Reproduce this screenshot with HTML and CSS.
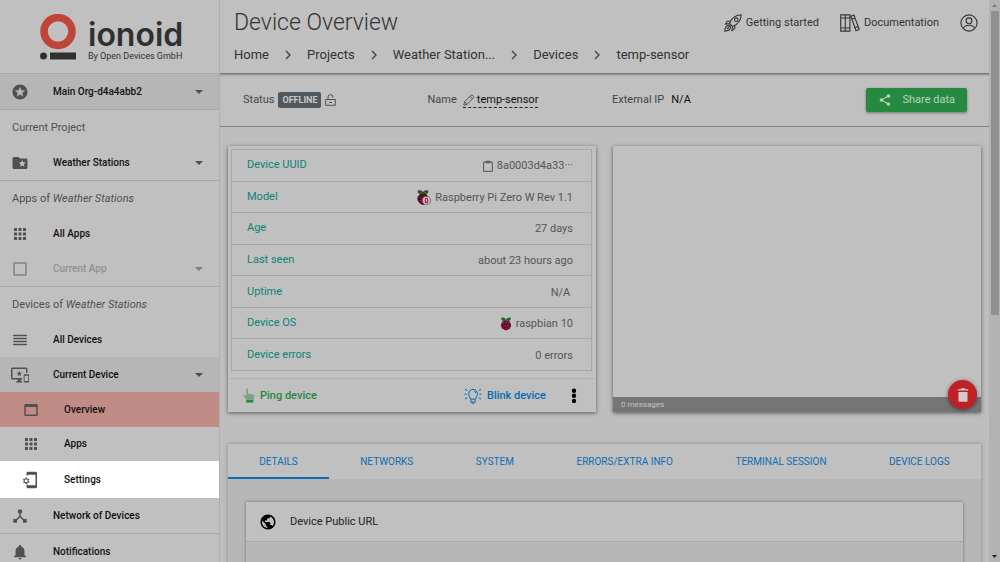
FILE: index.html
```html
<!DOCTYPE html>
<html lang="en">
<head>
<meta charset="utf-8">
<title>Device Overview</title>
<link rel="stylesheet" href="styles.css">
</head>
<body>
<div class="app">
  <nav class="sidebar" aria-label="Main">
    <a class="brand" href="#">
      <svg class="brand-mark" viewBox="0 0 36 46" width="36" height="46" aria-hidden="true"><circle cx="18" cy="17.500" r="14" fill="none" stroke="#be4538" stroke-width="7.500"/><circle cx="3.500" cy="42" r="3.500" fill="#303030"/><rect x="10" y="38.500" width="26" height="7" fill="#303030"/></svg>
      <span class="brand-text"><span class="brand-name">ionoid</span><span class="brand-sub">By Open Devices GmbH</span></span>
    </a>
    <button class="item shaded line-top line" type="button">
      <svg class="icon" viewBox="0 0 24 24"><path d="M11.99 2C6.47 2 2 6.48 2 12s4.470 10 9.990 10C17.520 22 22 17.520 22 12S17.520 2 11.990 2zm4.240 16L12 15.450 7.770 18l1.120-4.810-3.730-3.230 4.920-.42L12 5l1.920 4.530 4.920.42-3.730 3.230L16.230 18z"/></svg>
      <span class="item-label">Main Org-d4a4abb2</span><i class="caret"></i>
    </button>
    <h2 class="group">Current Project</h2>
    <button class="item line" type="button">
      <svg class="icon" viewBox="0 0 24 24"><path d="M20 6h-8l-2-2H4c-1.100 0-2 .9-2 2v12c0 1.100.9 2 2 2h16c1.100 0 2-.9 2-2V8c0-1.100-.9-2-2-2zm-2.060 11L15 15.280 12.060 17l.78-3.330-2.590-2.240 3.410-.29L15 8l1.340 3.140 3.410.29-2.590 2.240.78 3.330z"/></svg>
      <span class="item-label">Weather Stations</span><i class="caret"></i>
    </button>
    <h2 class="group">Apps of <em>Weather Stations</em></h2>
    <a class="item" href="#">
      <svg class="icon" viewBox="0 0 24 24"><path d="M4 8h4V4H4v4zm6 12h4v-4h-4v4zm-6 0h4v-4H4v4zm0-6h4v-4H4v4zm6 0h4v-4h-4v4zm6-10v4h4V4h-4zm-6 4h4V4h-4v4zm6 6h4v-4h-4v4zm0 6h4v-4h-4v4z"/></svg>
      <span class="item-label">All Apps</span>
    </a>
    <button class="item line disabled" type="button" disabled>
      <svg class="icon" viewBox="0 0 24 24"><path d="M19 5v14H5V5h14m0-2H5c-1.100 0-2 .9-2 2v14c0 1.100.9 2 2 2h14c1.100 0 2-.9 2-2V5c0-1.100-.9-2-2-2z"/></svg>
      <span class="item-label">Current App</span><i class="caret"></i>
    </button>
    <h2 class="group">Devices of <em>Weather Stations</em></h2>
    <a class="item" href="#">
      <svg class="icon" viewBox="0 0 24 24"><path d="M3 15h18v-2H3v2zm0 4h18v-2H3v2zm0-8h18V9H3v2zm0-6v2h18V5H3z"/></svg>
      <span class="item-label">All Devices</span>
    </a>
    <button class="item shaded" type="button">
      <svg class="icon" viewBox="0 0 24 24"><path d="M23 11.010L18 11c-.55 0-1 .45-1 1v9c0 .55.45 1 1 1h5c.55 0 1-.45 1-1v-9c0-.55-.45-.99-1-.99zM23 20h-5v-7h5v7zM20 2H2C.89 2 0 2.890 0 4v12c0 1.100.89 2 2 2h7v2H7v2h8v-2h-2v-2h2v-2H2V4h18v5h2V4c0-1.110-.9-2-2-2zm-8.030 7L11 6l-.97 3H7l2.470 1.760-.94 2.910 2.470-1.800 2.470 1.800-.94-2.910L15 9h-3.030z"/></svg>
      <span class="item-label">Current Device</span><i class="caret"></i>
    </button>
    <a class="item sub active" href="#">
      <svg class="icon" viewBox="0 0 24 24"><path d="M19 4H5c-1.110 0-2 .9-2 2v12c0 1.100.89 2 2 2h14c1.100 0 2-.9 2-2V6c0-1.100-.9-2-2-2zm0 14H5V8h14v10z"/></svg>
      <span class="item-label">Overview</span>
    </a>
    <a class="item sub short" href="#">
      <svg class="icon" viewBox="0 0 24 24"><path d="M4 8h4V4H4v4zm6 12h4v-4h-4v4zm-6 0h4v-4H4v4zm0-6h4v-4H4v4zm6 0h4v-4h-4v4zm6-10v4h4V4h-4zm-6 4h4V4h-4v4zm6 6h4v-4h-4v4zm0 6h4v-4h-4v4z"/></svg>
      <span class="item-label">Apps</span>
    </a>
    <a class="item sub spotlight" href="#">
      <svg class="icon" viewBox="0 0 24 24"><path d="M18 1.010L8 1c-1.100 0-2 .9-2 2v3h2V5h10v14H8v-1H6v3c0 1.100.9 2 2 2h10c1.100 0 2-.9 2-2V3c0-1.100-.9-1.990-2-1.990zM8.820 12.500l.93-.73-1-1.730-1.180.46c-.25-.19-.52-.35-.82-.47L6.570 8.800h-2l-.18 1.230c-.3.120-.57.280-.82.470l-1.180-.46-1 1.730.98.73a3.500 3.500 0 0 0 0 1l-.98.73 1 1.730 1.180-.46c.25.190.52.350.82.470l.18 1.230h2l.18-1.230c.3-.12.57-.28.82-.47l1.180.46 1-1.730-.93-.73a3.500 3.500 0 0 0 0-1zM5.570 15.100a2.100 2.100 0 1 1 0-4.200 2.100 2.100 0 0 1 0 4.200z"/></svg>
      <span class="item-label">Settings</span>
    </a>
    <a class="item line" href="#">
      <svg class="icon" viewBox="0 0 24 24"><path d="M17 16l-4-4V8.820C14.160 8.400 15 7.300 15 6c0-1.660-1.340-3-3-3S9 4.340 9 6c0 1.300.84 2.400 2 2.820V12l-4 4H3v5h5v-3.050l4-4.200 4 4.200V21h5v-5h-4z"/></svg>
      <span class="item-label">Network of Devices</span>
    </a>
    <a class="item" href="#">
      <svg class="icon" viewBox="0 0 24 24"><path d="M12 22c1.100 0 2-.9 2-2h-4c0 1.100.89 2 2 2zm6-6v-5c0-3.070-1.640-5.640-4.500-6.320V4c0-.83-.67-1.500-1.500-1.500s-1.500.67-1.500 1.500v.68C7.630 5.360 6 7.920 6 11v5l-2 2v1h16v-1l-2-2z"/></svg>
      <span class="item-label">Notifications</span>
    </a>
  </nav>

  <main class="main">
    <header class="header">
      <div class="header-top">
        <h1 class="title">Device Overview</h1>
        <div class="header-links">
          <a class="header-link" href="#">
            <svg class="line-icon" viewBox="0 0 18 18" width="18" height="18"><path d="M5.500 9.500C7 5 11 1.300 17.200.8 16.800 7 13 11 8.500 12.500zM6.500 7.200H3.200L1.500 10l4 -.4M10.800 11.400v3L8 16.500l.5-4M5 11.500C2.500 11.300 1 13 .8 17.200 4.500 17 6.500 15.500 6.500 13zM5 13l-2 2"/><circle cx="12.300" cy="5.700" r="1.800"/></svg>
            Getting started</a>
          <a class="header-link" href="#">
            <svg class="line-icon" viewBox="0 0 20 18" width="20" height="18"><path d="M.7.900h4.600v16.200H.700zM5.300.900h4.600v16.200H5.300zM.7 4h9.200M.7 14h9.200M10.900 2.200l3-1.200 5.300 14.500-3.200 1.300zM12 5l3-1.100M15 13.800l3.200-1.200"/></svg>
            Documentation</a>
          <a class="header-link" href="#" aria-label="Account">
            <svg class="line-icon" viewBox="0 0 18 18" width="18" height="18"><circle cx="9" cy="9" r="8.100"/><circle cx="9" cy="6.800" r="2.900"/><path d="M3.500 14.500c.5-2.500 2-3.300 5.500-3.300s5 .8 5.500 3.300"/></svg>
          </a>
        </div>
      </div>
      <nav class="crumbs" aria-label="Breadcrumb">
        <a href="#">Home</a><svg class="chev" viewBox="0 0 6 10"><path d="M1 1l4 4-4 4"/></svg>
        <a href="#">Projects</a><svg class="chev" viewBox="0 0 6 10"><path d="M1 1l4 4-4 4"/></svg>
        <a href="#">Weather Station...</a><svg class="chev" viewBox="0 0 6 10"><path d="M1 1l4 4-4 4"/></svg>
        <a href="#">Devices</a><svg class="chev" viewBox="0 0 6 10"><path d="M1 1l4 4-4 4"/></svg>
        <a href="#">temp-sensor</a>
      </nav>
    </header>

    <section class="status">
      <div class="field">Status <span class="badge">OFFLINE</span>
        <svg class="lock" viewBox="0 0 11 12" width="11" height="12"><path d="M.7 5.500h9.600v5.800H.700zM3 5.500V3a2.500 2.300 0 0 1 5 0v.7M4 8.500h3"/></svg>
      </div>
      <div class="field">Name
        <a class="rename" href="#"><svg class="pencil" viewBox="0 0 12 12" width="12" height="12"><path d="M.8 11.200l.8-3.400L8.200 1.200c.8-.8 3.200 1.400 2.500 2.400L4.200 10.300zM7 2.400L9.600 5M1.800 7.900l2.200 2.300"/></svg>temp-sensor</a>
      </div>
      <div class="field">External IP <span class="ip">N/A</span></div>
      <div class="field end">
        <button class="share" type="button"><svg viewBox="0 0 24 24" width="14" height="14" fill="currentColor"><path d="M18 16.080c-.76 0-1.440.3-1.960.77L8.910 12.700c.05-.23.090-.46.090-.7s-.04-.47-.09-.7l7.050-4.110c.54.5 1.250.81 2.040.81 1.660 0 3-1.340 3-3s-1.340-3-3-3-3 1.340-3 3c0 .24.040.47.090.7L8.040 9.810C7.500 9.310 6.790 9 6 9c-1.660 0-3 1.340-3 3s1.340 3 3 3c.79 0 1.500-.31 2.040-.81l7.120 4.160c-.05.21-.08.43-.08.65 0 1.610 1.310 2.920 2.920 2.920s2.920-1.310 2.920-2.920-1.310-2.920-2.920-2.920z"/></svg>Share data</button>
      </div>
    </section>

    <div class="content">
      <div class="cards">
        <section class="card">
          <div class="table-wrap">
            <table class="info">
              <tr><th scope="row">Device UUID</th><td><span class="val"><svg class="clip" viewBox="0 0 10 12" width="10" height="12"><path d="M.7 2h8.600v9.300H.700zM3 2.800V1.600h1L5 .6l1 1h1v1.200z"/></svg>8a0003d4a33<span class="dots">···</span></span></td></tr>
              <tr><th scope="row">Model</th><td><span class="val wide"><svg viewBox="0 0 14 15" width="14" height="15"><path d="M1 1c2-.8 4.500-.3 5 2 .5-2.300 3-2.800 5-2-.2 2.500-2 4-5 3.600C3 5 1.200 3.500 1 1z" fill="#38651f" stroke="#111" stroke-width=".6"/><path d="M6 4.500c3-.8 5.500 1.500 5 5-.5 3-3 4.800-5 4.800S1 12 .8 8.500C.800 6 3 4.300 6 4.500z" fill="#7f0c35" stroke="#111" stroke-width=".9"/><path d="M3 6l2 1M2 9.500h2" stroke="#111"/><circle cx="9.500" cy="10.500" r="4.100" fill="#c8bcc0" stroke="#74434f" stroke-width=".6"/><ellipse cx="9.500" cy="10.500" rx="1.300" ry="2.200" fill="none" stroke="#9c1843" stroke-width="1.100"/></svg>Raspberry Pi Zero W Rev 1.1</span></td></tr>
              <tr><th scope="row">Age</th><td>27 days</td></tr>
              <tr><th scope="row">Last seen</th><td>about 23 hours ago</td></tr>
              <tr><th scope="row">Uptime</th><td>N/A&nbsp;</td></tr>
              <tr><th scope="row">Device OS</th><td><span class="val"><svg viewBox="0 0 12 14" width="12" height="14"><path d="M1 1c2-1 4.500-.3 5 2 .5-2.300 3-3 5-2-.2 2.500-2 3.800-5 3.400C3 4.800 1.200 3.500 1 1z" fill="#226b30"/><path d="M6 4l3.500.5 1.500 3-1 4L6 13.500 2 11.500 1 7.500l1.500-3z" fill="#2b0716"/><g fill="#ad1248"><circle cx="6" cy="5.300" r="1.200"/><circle cx="3.300" cy="6.300" r="1.200"/><circle cx="8.700" cy="6.300" r="1.200"/><circle cx="4.500" cy="8.700" r="1.300"/><circle cx="7.500" cy="8.700" r="1.300"/><circle cx="1.700" cy="8.800" r=".9"/><circle cx="10.300" cy="8.800" r=".9"/><circle cx="6" cy="11.500" r="1.300"/><circle cx="3.300" cy="11" r="1"/><circle cx="8.700" cy="11" r="1"/></g></svg>raspbian 10</span></td></tr>
              <tr><th scope="row">Device errors</th><td>0 errors</td></tr>
            </table>
          </div>
          <div class="actions">
            <button class="act ping" type="button"><svg viewBox="0 0 12 15" width="12" height="15"><path d="M3.300 1.200C3.300-.1 5 0 5 1.200v4.300l5 1c1.200.3 1.500 1 1.300 2L10.500 12h-7L.5 8.200c-.6-.9.5-1.700 1.300-1.200l1.500 1z" fill="#7aa687"/><rect x="3.300" y="12" width="7" height="2.600" fill="#27893e"/></svg>Ping device</button>
            <button class="act blink" type="button"><svg class="bulb" viewBox="0 0 18 16" width="18" height="16"><path d="M6.500 11.200C6.500 9.500 4.700 8.700 4.700 5.800a4.300 4.500 0 0 1 8.600 0c0 2.900-1.800 3.700-1.800 5.400zM6.800 11.500v2.500h4.400v-2.500M7.500 15.200h3M10 3c1 .2 1.700 1 1.800 2M.5 6.200h2.300M15.200 6.200h2.300M1 1.200l2.300 1.300M17 1.200l-2.300 1.300M1 11l2.300-1.300M17 11l-2.300-1.300"/></svg>Blink device</button>
            <button class="more" type="button" aria-label="More"><svg viewBox="0 0 6 16" width="6" height="16"><circle cx="3" cy="2.700" r="2.200"/><circle cx="3" cy="7.800" r="2.200"/><circle cx="3" cy="12.900" r="2.200"/></svg></button>
          </div>
        </section>

        <section class="card log">
          <div class="log-body"></div>
          <div class="log-foot">0 messages</div>
          <button class="trash" type="button" aria-label="Clear messages"><svg viewBox="0 0 12 14" width="12" height="14"><path d="M1.500 4h9v8.500c0 .7-.5 1.300-1.300 1.300H2.800c-.8 0-1.300-.6-1.300-1.300zM.7 1.200h3L4.500.3h3l.8.9h3v1.300H.700z" fill="#d4cccc"/></svg></button>
        </section>
      </div>

      <section class="details">
        <div class="tabs" role="tablist">
          <button class="tab selected" role="tab" aria-selected="true" type="button">DETAILS</button>
          <button class="tab" role="tab" type="button">NETWORKS</button>
          <button class="tab" role="tab" type="button">SYSTEM</button>
          <button class="tab" role="tab" type="button">ERRORS/EXTRA INFO</button>
          <button class="tab" role="tab" type="button">TERMINAL SESSION</button>
          <button class="tab" role="tab" type="button">DEVICE LOGS</button>
        </div>
        <div class="panel">
          <div class="url-card">
            <h3 class="url-head"><svg viewBox="0 0 24 24" width="18" height="18"><path d="M12 2C6.480 2 2 6.480 2 12s4.480 10 10 10 10-4.480 10-10S17.520 2 12 2zm-1 17.930c-3.950-.49-7-3.850-7-7.930 0-.62.080-1.210.210-1.790L9 15v1c0 1.100.9 2 2 2v1.930zm6.900-2.540c-.26-.81-1-1.390-1.900-1.390h-1v-3c0-.55-.45-1-1-1H8v-2h2c.55 0 1-.45 1-1V7h2c1.100 0 2-.9 2-2v-.41c2.930 1.190 5 4.060 5 7.410 0 2.080-.8 3.970-2.100 5.390z"/></svg>Device Public URL</h3>
          </div>
        </div>
      </section>
    </div>
  </main>

  <div class="scroll" aria-hidden="true">
    <svg viewBox="0 0 5 3" width="5" height="3"><path d="M0 3L2.500 0 5 3z" fill="#777"/></svg>
    <div class="thumb"></div>
    <svg viewBox="0 0 5 3" width="5" height="3"><path d="M0 0l2.500 3L5 0z" fill="#222"/></svg>
  </div>
</div>
</body>
</html>
```
FILE: styles.css
```css
* { box-sizing: border-box; }
body { margin: 0; background: #bebebe; color: #222; font: 11px/16px Roboto, "Liberation Sans", sans-serif; }
a { color: inherit; text-decoration: none; }
button { margin: 0; padding: 0; border: 0; background: none; color: inherit; font: inherit; }
h1, h2, h3 { margin: 0; font-weight: 400; }
svg { flex: none; display: block; }

.app { display: grid; grid-template-columns: 220px 1fr 11px; height: 100vh; overflow: hidden; }

.sidebar { display: flex; flex-direction: column; background: #c0c0c0; border-right: 1px solid #b0b0b0; overflow: hidden; }
.sidebar > * { flex: none; }
.brand { display: flex; height: 73px; padding: 14px 0 0 40px; gap: 12px; color: #303030; }
.brand-text { display: flex; flex-direction: column; padding-top: 6px; }
.brand-name { font: 600 32px/30px Inter, sans-serif; }
.brand-sub { font-size: 9px; line-height: 12px; white-space: nowrap; }
.item { display: flex; align-items: center; width: 100%; height: 35px; padding: 0 17px 0 11px; font-size: 10px; font-weight: 500; color: #111; text-align: left; }
.line { height: 36px; border-bottom: 1px solid #a9a9a9; }
.line-top { height: 37px; border-top: 1px solid #a9a9a9; }
.shaded { background: #b6b6b6; }
.icon { width: 18px; height: 18px; margin-right: 24px; fill: #505050; }
.item-label { flex: 1; }
.caret { margin-right: -1px; border: 4px solid transparent; border-top-color: #505050; border-bottom: 0; }
.group { height: 35px; padding-left: 12px; font-size: 11px; line-height: 35px; color: #505050; }
.disabled { color: #909090; }
.disabled .icon { fill: #808080; }
.disabled .caret { border-top-color: #808080; }
.sub { padding-left: 22px; }
.active { background: #c08c85; }
.short { height: 34px; }
.spotlight { height: 37px; background: #fff; }

.main { display: flex; flex-direction: column; min-width: 0; overflow: hidden; }
.header { flex: none; display: flex; flex-direction: column; height: 74px; padding: 8px 11px 0 14px; border-bottom: 1px solid #7a7a7a; background: #c0c0c0; color: #333; }
.header-top { display: flex; justify-content: space-between; height: 30px; }
.title { font-size: 23px; font-weight: 300; line-height: 30px; }
.header-links { display: flex; align-items: center; gap: 21px; }
.header-link { display: flex; align-items: center; gap: 4px; }
.line-icon { fill: none; stroke: #333; stroke-width: 1.1; }
.crumbs { display: flex; align-items: center; padding-top: 8px; gap: 16px; font-size: 13px; line-height: 18px; }
.chev { width: 6px; height: 10px; fill: none; stroke: #444; stroke-width: 1.4; }

.status { flex: none; display: grid; grid-template-columns: repeat(4, 1fr); align-items: center; height: 53px; padding: 0 8px 0 23px; border-bottom: 1px solid #808080; background: #c0c0c0; color: #3f454d; box-shadow: inset 0 2px 2px -1px rgba(0,0,0,.3); }
.field { display: flex; align-items: center; gap: 4px; }
.badge { padding: 0 4px; border-radius: 2px; background: #50585e; color: #c8c8c8; font-size: 9px; font-weight: 700; }
.lock, .pencil, .clip { fill: none; stroke: #4c5258; stroke-width: 1; }
.rename { display: flex; align-items: center; margin-left: 2px; gap: 2px; line-height: 14px; border-bottom: 1px dashed #222; color: #111; }
.ip { margin-left: 3px; color: #111; }
.end { justify-content: flex-end; padding-right: 14px; }
.share { display: flex; align-items: center; gap: 10px; height: 24px; padding: 0 12px; border-radius: 2px; background: #25893f; color: #bdd2c1; font-weight: 400; box-shadow: 0 1px 3px rgba(0,0,0,.4); }

.content { padding: 19px 8px 0; }
.cards { display: grid; grid-template-columns: 1fr 1fr; gap: 17px; }
.card { position: relative; display: flex; flex-direction: column; height: 266px; background: #c0c0c0; box-shadow: 0 1px 4px rgba(0,0,0,.55); }
.table-wrap { padding: 3px 4px 7px 3px; }
.info { width: 100%; height: 222px; border: 1px solid #a8a8a8; border-collapse: collapse; color: #555; }
.info tr { border-bottom: 1px solid #a8a8a8; }
.info th { padding: 0 0 0 15px; text-align: left; font-weight: 400; color: #0b8378; }
.info td { padding: 2px 18px 0 0; text-align: right; }
.val { display: flex; justify-content: flex-end; align-items: center; gap: 4px; }
.dots { margin-left: -4px; }
.actions { flex: 1; display: flex; align-items: center; padding: 0 19px 0 15px; border-top: 1px solid #b3b3b3; }
.act { display: flex; align-items: center; gap: 5px; font-size: 11px; font-weight: 500; }
.ping { color: #27893e; }
.blink { margin-left: auto; color: #086bb0; }
.bulb { fill: none; stroke: #086bb0; stroke-width: 1; }
.more { margin-left: 25px; }
.log-body { flex: 1; }
.log-foot { height: 15px; padding-left: 8px; background: #757575; color: #c4c4c4; font-size: 8px; line-height: 16px; }
.trash { position: absolute; right: 4px; bottom: 3px; display: grid; place-items: center; width: 29px; height: 29px; border-radius: 50%; background: #c02126; box-shadow: 0 1px 4px rgba(0,0,0,.5); }

.details { margin-top: 32px; box-shadow: 0 0 4px rgba(0,0,0,.3); }
.tabs { display: flex; height: 35px; background: #c0c0c0; }
.tab { flex: 1 0 auto; padding: 2px 30px 0; border-bottom: 2px solid transparent; color: #0d6db0; font-size: 10px; white-space: nowrap; }
.selected { border-bottom-color: #0d6db0; }
.panel { padding: 23px 18px; background: #b7b7b7; }
.url-card { min-height: 120px; background: #b7b7b7; box-shadow: 0 0 3px rgba(0,0,0,.4); }
.url-head { display: flex; align-items: center; gap: 13px; height: 40px; padding-left: 13px; border-bottom: 1px solid #a9a9a9; background: #c0c0c0; font-size: 11px; }

.scroll { display: flex; flex-direction: column; align-items: center; justify-content: space-between; padding: 4px 1px; background: #b3b3b3; }
.thumb { width: 8px; height: 304px; margin: 4px 0 auto; background: #909090; }
```
